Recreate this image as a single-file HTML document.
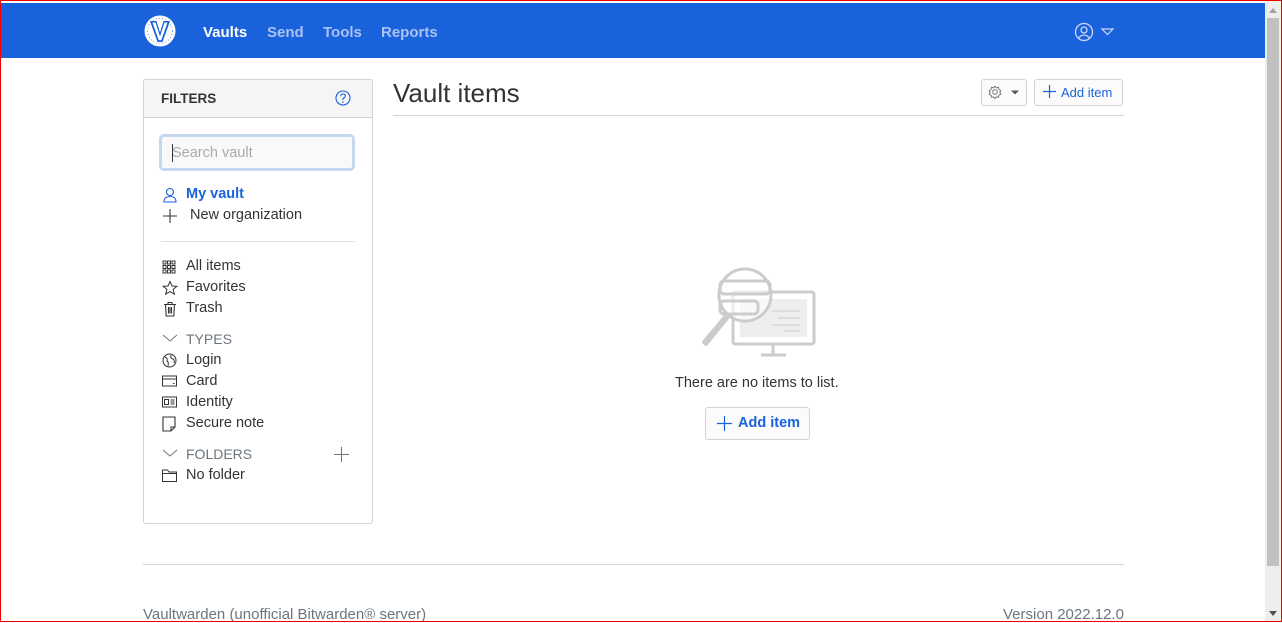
<!DOCTYPE html>
<html><head><meta charset="utf-8"><style>
*{box-sizing:border-box;margin:0;padding:0}
body{width:1282px;height:622px;overflow:hidden;background:#fff;font-family:"Liberation Sans",sans-serif;color:#333;position:relative}
.frame{position:absolute;inset:0;border:1px solid #e00;pointer-events:none;z-index:10}
.nav{position:absolute;left:1px;top:3px;width:1264px;height:55px;background:#1a61dc}
.nav a{position:absolute;top:21px;font-size:15px;font-weight:bold;color:#a9c3f2;text-decoration:none}
.abs{position:absolute}
.sb{position:absolute;left:1265px;top:1px;width:16px;height:620px;background:#ededed}
.sb .th{position:absolute;left:2px;top:17px;width:12px;height:548px;background:#c1c1c1}
.item{position:absolute;left:186px;font-size:14.5px;color:#333}
.ic{position:absolute;left:162px}
.hdr{position:absolute;left:186px;font-size:14px;color:#6c757d}
</style></head><body>
<div class="frame"></div>
<div class="nav">
 <svg class="abs" style="left:142px;top:11px" width="34" height="34" viewBox="0 0 34 34">
  <circle cx="17" cy="17" r="15.5" fill="#fff"/>
  <circle cx="17" cy="17" r="12.5" fill="none" stroke="#1a61dc" stroke-width="0.8" stroke-dasharray="0.8 2.4"/>
  <path d="M7 7 L13.5 7 L17 18.5 L20.5 7 L27 7 L19.5 28 L14.5 28 Z" fill="#1a61dc"/>
  <path d="M9.5 8.5 L12.5 8.5 L17 22.5 L21.5 8.5 L24.5 8.5 L18.3 26.3 L15.7 26.3 Z" fill="#fff"/>
 </svg>
 <a style="left:202px;color:#fff">Vaults</a>
 <a style="left:266px">Send</a>
 <a style="left:322px">Tools</a>
 <a style="left:380px">Reports</a>
 <svg class="abs" style="left:1073px;top:19px" width="42" height="20" viewBox="0 0 42 20">
  <circle cx="10" cy="10" r="8.5" fill="none" stroke="#c7d7f5" stroke-width="1.3"/>
  <circle cx="10" cy="8" r="3" fill="none" stroke="#c7d7f5" stroke-width="1.3"/>
  <path d="M4.5 16 Q10 10 15.5 16" fill="none" stroke="#c7d7f5" stroke-width="1.3"/>
  <path d="M28 7 L39 7 L33.5 12.5 Z" fill="none" stroke="#c7d7f5" stroke-width="1.2"/>
 </svg>
</div>
<div class="sb"><div class="th"></div>
 <div class="abs" style="left:4px;top:7px;border-left:4px solid transparent;border-right:4px solid transparent;border-bottom:5px solid #a3a3a3"></div>
 <div class="abs" style="left:4px;top:610px;border-left:4px solid transparent;border-right:4px solid transparent;border-top:5px solid #505050"></div>
</div>

<div class="abs" style="left:143px;top:79px;width:230px;height:445px;border:1px solid #ced4da;border-radius:3px"></div>
<div class="abs" style="left:144px;top:80px;width:228px;height:38px;background:#f5f5f5;border-bottom:1px solid #ced4da"></div>
<div class="abs" style="left:161px;top:91px;font-size:13.5px;font-weight:bold;color:#333">FILTERS</div>
<svg class="abs" style="left:335px;top:90px" width="16" height="16" viewBox="0 0 16 16"><circle cx="8" cy="8" r="7" fill="none" stroke="#1a61dc" stroke-width="1.1"/><path d="M5.8 6.2 Q5.8 4 8 4 Q10.2 4 10.2 6 Q10.2 7.5 8 8.5 L8 10" fill="none" stroke="#1a61dc" stroke-width="1.1"/><circle cx="8" cy="12" r=".8" fill="#1a61dc"/></svg>
<div class="abs" style="left:159px;top:134px;width:196px;height:37px;border:3px solid #c6d7f3;border-radius:5px;background:#f9f9f9"></div>
<div class="abs" style="left:172px;top:145px;font-size:14.5px;color:#aaa">Search vault</div>
<div class="abs" style="left:172px;top:144px;width:1px;height:18px;background:#333"></div>

<svg class="ic" style="top:187px" width="16" height="16" viewBox="0 0 16 16" fill="none" stroke="#1a61dc" stroke-width="1.1"><circle cx="8" cy="5" r="3.5"/><path d="M2 15 Q2 9.5 8 9.5 Q14 9.5 14 15 Z"/></svg>
<div class="item" style="top:186px;color:#1a61dc;font-weight:bold">My vault</div>
<svg class="ic" style="top:208px" width="16" height="16" viewBox="0 0 16 16" stroke="#333" stroke-width="1.1"><path d="M8 1V15M1 8H15"/></svg>
<div class="item" style="top:207px;left:190px">New organization</div>
<div class="abs" style="left:161px;top:241px;width:194px;height:1px;background:#dee2e6"></div>

<svg class="ic" style="top:260px" width="14" height="14" viewBox="0 0 14 14" fill="none" stroke="#333" stroke-width="1"><g><rect x="1" y="1" width="3" height="3"/><rect x="5.5" y="1" width="3" height="3"/><rect x="10" y="1" width="3" height="3"/><rect x="1" y="5.5" width="3" height="3"/><rect x="5.5" y="5.5" width="3" height="3"/><rect x="10" y="5.5" width="3" height="3"/><rect x="1" y="10" width="3" height="3"/><rect x="5.5" y="10" width="3" height="3"/><rect x="10" y="10" width="3" height="3"/></g></svg>
<div class="item" style="top:258px">All items</div>
<svg class="ic" style="top:280px" width="16" height="16" viewBox="0 0 16 16" fill="none" stroke="#333" stroke-width="1"><path d="M8 1.5 L10 6 L14.8 6.3 L11.1 9.4 L12.3 14.2 L8 11.6 L3.7 14.2 L4.9 9.4 L1.2 6.3 L6 6 Z"/></svg>
<div class="item" style="top:279px">Favorites</div>
<svg class="ic" style="top:301px" width="16" height="16" viewBox="0 0 16 16" fill="none" stroke="#333" stroke-width="1.1"><path d="M2 3.5H14M6 3.5V1.5H10V3.5M3.5 3.5L4.2 15H11.8L12.5 3.5M6.5 6V12.5M8 6V12.5M9.5 6V12.5"/></svg>
<div class="item" style="top:300px">Trash</div>

<svg class="ic" style="top:333px" width="16" height="10" viewBox="0 0 16 10" fill="none" stroke="#6c757d" stroke-width="1"><path d="M1 2L8 8L15 2"/></svg>
<div class="hdr" style="top:331px">TYPES</div>
<svg class="ic" style="top:353px" width="15" height="15" viewBox="0 0 15 15" fill="none" stroke="#333" stroke-width="1"><circle cx="7.5" cy="7.5" r="6.5"/><path d="M3 4 Q6 5 5 8 Q7 9 6 13M9 2 Q8 5 11 6 Q13 7 12 10"/></svg>
<div class="item" style="top:352px">Login</div>
<svg class="ic" style="top:375px" width="15" height="12" viewBox="0 0 15 12" fill="none" stroke="#333" stroke-width="1"><rect x=".5" y="1" width="14" height="10"/><path d="M.5 4H14.5M11 8.5H12.5"/></svg>
<div class="item" style="top:373px">Card</div>
<svg class="ic" style="top:396px" width="15" height="12" viewBox="0 0 15 12" fill="none" stroke="#333" stroke-width="1"><rect x=".5" y="1" width="14" height="10"/><rect x="2.5" y="3.5" width="4" height="5"/><path d="M8.5 4H12.5M8.5 6H12.5M8.5 8H12.5"/></svg>
<div class="item" style="top:394px">Identity</div>
<svg class="ic" style="top:416px" width="14" height="16" viewBox="0 0 14 16" fill="none" stroke="#333" stroke-width="1.1"><path d="M1 1H13V11L9 15H1Z M9 15V11H13"/></svg>
<div class="item" style="top:415px">Secure note</div>

<svg class="ic" style="top:448px" width="16" height="10" viewBox="0 0 16 10" fill="none" stroke="#6c757d" stroke-width="1"><path d="M1 2L8 8L15 2"/></svg>
<div class="hdr" style="top:446px">FOLDERS</div>
<svg class="abs" style="left:334px;top:447px" width="15" height="15" viewBox="0 0 15 15" stroke="#6c757d" stroke-width="1"><path d="M7.5 0V15M0 7.5H15"/></svg>
<svg class="ic" style="top:469px" width="15" height="13" viewBox="0 0 15 13" fill="none" stroke="#333" stroke-width="1"><path d="M.5 1H5.5L7 3H14.5V12.5H.5Z M.5 4.5H14.5"/></svg>
<div class="item" style="top:467px">No folder</div>

<div class="abs" style="left:393px;top:78px;font-size:26px;color:#333">Vault items</div>
<div class="abs" style="left:393px;top:115px;width:731px;height:1px;background:#ced4da"></div>
<div class="abs" style="left:981px;top:79px;width:46px;height:27px;border:1px solid #ced4da;border-radius:3px;background:#fbfbfb"></div>
<svg class="abs" style="left:988px;top:85px" width="32" height="14" viewBox="0 0 32 14" fill="none" stroke="#777" stroke-width="1"><circle cx="7" cy="7" r="2.3"/><path d="M7 1.2L8.4 2.8 10.5 2.3 10.9 4.4 12.8 5.5 11.8 7.3 12.8 9.2 10.9 10.2 10.5 12.3 8.4 11.9 7 13.4 5.6 11.9 3.5 12.3 3.1 10.2 1.2 9.2 2.2 7.3 1.2 5.5 3.1 4.4 3.5 2.3 5.6 2.8Z"/><path d="M23 5.5H31L27 9.5Z" fill="#555" stroke="none"/></svg>
<div class="abs" style="left:1034px;top:79px;width:89px;height:27px;border:1px solid #ced4da;border-radius:3px;background:#fbfbfb"></div>
<svg class="abs" style="left:1043px;top:85px" width="13" height="13" viewBox="0 0 13 13" stroke="#1a61dc" stroke-width="1.2"><path d="M6.5 0V13M0 6.5H13"/></svg>
<div class="abs" style="left:1061px;top:85px;font-size:13px;color:#1a61dc">Add item</div>

<svg class="abs" style="left:700px;top:266px" width="118" height="92" viewBox="0 0 118 92" fill="none" stroke="#ccc" stroke-width="3">
 <rect x="33" y="26" width="81" height="52" rx="2"/>
 <rect x="40" y="33" width="67" height="38" fill="#eee" stroke="none"/>
 <path d="M72 45H100M78 52H100M72 59H100M84 65H100" stroke="#ddd" stroke-width="2"/>
 <path d="M73 78V88M61 89H86"/>
 <circle cx="45" cy="29" r="26" fill="#fff" fill-opacity=".6"/>
 <rect x="20" y="15" width="50" height="13" rx="4"/>
 <rect x="20" y="35" width="38" height="13" rx="4"/>
 <path d="M26 50L4 76 M27 52L6 78" stroke-width="4" stroke-linecap="round"/>
</svg>
<div class="abs" style="left:675px;top:375px;font-size:14.5px;color:#333">There are no items to list.</div>
<div class="abs" style="left:705px;top:407px;width:105px;height:33px;border:1px solid #ced4da;border-radius:3px;background:#fbfbfb"></div>
<svg class="abs" style="left:717px;top:416px" width="15" height="15" viewBox="0 0 15 15" stroke="#1a61dc" stroke-width="1.2"><path d="M7.5 0V15M0 7.5H15"/></svg>
<div class="abs" style="left:738px;top:415px;font-size:14.5px;font-weight:bold;color:#1a61dc">Add item</div>

<div class="abs" style="left:143px;top:564px;width:981px;height:1px;background:#ced4da"></div>
<div class="abs" style="left:143px;top:606px;font-size:15px;color:#6c757d">Vaultwarden (unofficial Bitwarden® server)</div>
<div class="abs" style="left:1003px;top:606px;font-size:15px;color:#6c757d">Version 2022.12.0</div>
</body></html>
